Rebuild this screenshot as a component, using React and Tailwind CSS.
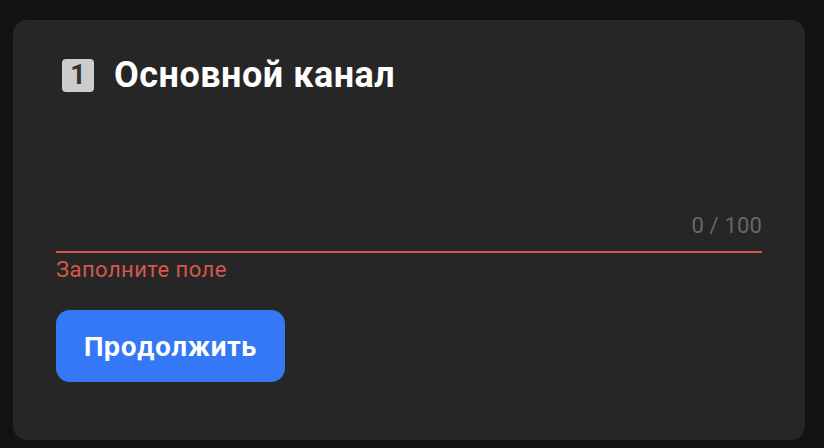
const App = () => {
    return (
        <div className="min-h-screen w-[824px] h-[448px] overflow-hidden bg-[#121214] pt-5 pl-[13px] font-['Roboto',sans-serif]">
            <div className="w-[792px] h-[420px] bg-[#262626] rounded-[14px] px-[43px] pt-[39px]">
                <div className="flex items-center h-[33px] pl-[6px]">
                    <span className="w-8 h-[33px] rounded-[4px] bg-[#cccccc] flex items-center justify-center text-[#333333] text-[27px] font-bold leading-none">1</span>
                    <h1 className="ml-5 text-[36px] leading-[33px] font-bold tracking-[0.5px] text-white whitespace-nowrap">Основной канал</h1>
                </div>

                <div className="mt-[127px] h-[32px] flex justify-end items-start border-b-2 border-[#d9534a] box-content">
                    <span className="-mt-[5px] text-[22px] leading-6 tracking-[0.15px] text-[#666666]">0 / 100</span>
                </div>
                <p className="mt-[5px] text-[22px] leading-6 tracking-[0.45px] text-[#d4574d]">Заполните поле</p>

                <button className="mt-[28px] w-[229px] h-[72px] pt-[1px] rounded-[14px] bg-[#3478f6] text-white text-[26px] tracking-[0.5px] font-bold font-['Inter',sans-serif] flex items-center justify-center">
                    Продолжить
                </button>
            </div>
        </div>
    );
};

export default App;
